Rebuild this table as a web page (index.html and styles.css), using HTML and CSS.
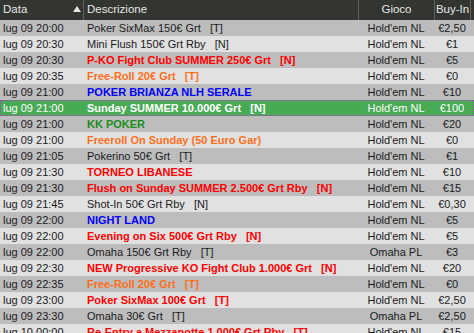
FILE: index.html
```html
<!DOCTYPE html>
<html>
<head>
<meta charset="utf-8">
<link rel="stylesheet" href="styles.css">
</head>
<body>
<div class="grid">
  <div class="hrow">
    <div class="h c-data">Data<span class="sort"></span></div>
    <div class="h c-desc">Descrizione</div>
    <div class="h c-game">Gioco</div>
    <div class="h c-buy">Buy-In</div>
    <div class="h c-end"></div>
  </div>
  <div class="row g"><div class="c-data">lug 09 20:00</div><div class="c-desc">Poker SixMax 150€ Grt   [T]</div><div class="c-game">Hold'em NL</div><div class="c-buy">€2,50</div></div>
  <div class="row l"><div class="c-data">lug 09 20:30</div><div class="c-desc">Mini Flush 150€ Grt Rby   [N]</div><div class="c-game">Hold'em NL</div><div class="c-buy">€1</div></div>
  <div class="row g"><div class="c-data">lug 09 20:30</div><div class="c-desc b red">P-KO Fight Club SUMMER 250€ Grt   [N]</div><div class="c-game">Hold'em NL</div><div class="c-buy">€5</div></div>
  <div class="row l"><div class="c-data">lug 09 20:35</div><div class="c-desc b orange">Free-Roll 20€ Grt   [T]</div><div class="c-game">Hold'em NL</div><div class="c-buy">€0</div></div>
  <div class="row g"><div class="c-data">lug 09 21:00</div><div class="c-desc b blue">POKER BRIANZA NLH SERALE</div><div class="c-game">Hold'em NL</div><div class="c-buy">€10</div></div>
  <div class="row sel"><div class="c-data">lug 09 21:00</div><div class="c-desc b">Sunday SUMMER 10.000€ Grt   [N]</div><div class="c-game">Hold'em NL</div><div class="c-buy">€100</div></div>
  <div class="row g"><div class="c-data">lug 09 21:00</div><div class="c-desc b green">KK POKER</div><div class="c-game">Hold'em NL</div><div class="c-buy">€20</div></div>
  <div class="row l"><div class="c-data">lug 09 21:00</div><div class="c-desc b orange">Freeroll On Sunday (50 Euro Gar)</div><div class="c-game">Hold'em NL</div><div class="c-buy">€0</div></div>
  <div class="row g"><div class="c-data">lug 09 21:05</div><div class="c-desc">Pokerino 50€ Grt   [T]</div><div class="c-game">Hold'em NL</div><div class="c-buy">€1</div></div>
  <div class="row l"><div class="c-data">lug 09 21:30</div><div class="c-desc b red">TORNEO LIBANESE</div><div class="c-game">Hold'em NL</div><div class="c-buy">€10</div></div>
  <div class="row g"><div class="c-data">lug 09 21:30</div><div class="c-desc b red">Flush on Sunday SUMMER 2.500€ Grt Rby   [N]</div><div class="c-game">Hold'em NL</div><div class="c-buy">€15</div></div>
  <div class="row l"><div class="c-data">lug 09 21:45</div><div class="c-desc">Shot-In 50€ Grt Rby   [N]</div><div class="c-game">Hold'em NL</div><div class="c-buy">€0,30</div></div>
  <div class="row g"><div class="c-data">lug 09 22:00</div><div class="c-desc b blue">NIGHT LAND</div><div class="c-game">Hold'em NL</div><div class="c-buy">€5</div></div>
  <div class="row l"><div class="c-data">lug 09 22:00</div><div class="c-desc b red">Evening on Six 500€ Grt Rby   [N]</div><div class="c-game">Hold'em NL</div><div class="c-buy">€5</div></div>
  <div class="row g"><div class="c-data">lug 09 22:00</div><div class="c-desc">Omaha 150€ Grt Rby   [T]</div><div class="c-game">Omaha PL</div><div class="c-buy">€3</div></div>
  <div class="row l"><div class="c-data">lug 09 22:30</div><div class="c-desc b red">NEW Progressive KO Fight Club 1.000€ Grt   [N]</div><div class="c-game">Hold'em NL</div><div class="c-buy">€20</div></div>
  <div class="row g"><div class="c-data">lug 09 22:35</div><div class="c-desc b orange">Free-Roll 20€ Grt   [T]</div><div class="c-game">Hold'em NL</div><div class="c-buy">€0</div></div>
  <div class="row l"><div class="c-data">lug 09 23:00</div><div class="c-desc b red">Poker SixMax 100€ Grt   [T]</div><div class="c-game">Hold'em NL</div><div class="c-buy">€2,50</div></div>
  <div class="row g"><div class="c-data">lug 09 23:30</div><div class="c-desc">Omaha 30€ Grt   [T]</div><div class="c-game">Omaha PL</div><div class="c-buy">€2,50</div></div>
  <div class="row l"><div class="c-data">lug 10 00:00</div><div class="c-desc b red">Re-Entry a Mezzanotte 1.000€ Grt Rby   [T]</div><div class="c-game">Hold'em NL</div><div class="c-buy">€15</div></div>
</div>
</body>
</html>
```
FILE: styles.css
```css
html, body {
  margin: 0;
  padding: 0;
  overflow: hidden;
  background: #e0e0e0;
}
body {
  font-family: "Liberation Sans", Arial, sans-serif;
  font-size: 11px;
  color: #1a1a22;
}
.grid {
  width: 474px;
}
.hrow, .row {
  display: grid;
  grid-template-columns: 83px 275px 76px 36px 4px;
}
.hrow {
  height: 20px;
  background: #333531;
  color: #e6e6e6;
  line-height: 19px;
  font-size: 11.5px;
}
.h {
  position: relative;
  white-space: nowrap;
  overflow: hidden;
}
.h + .h {
  border-left: 1px solid #5f615d;
}
.h.c-data { padding-left: 3px; }
.h.c-desc { padding-left: 3px; }
.h.c-game, .h.c-buy { text-align: center; }
.sort {
  position: absolute;
  right: 2px;
  top: 6px;
  width: 0;
  height: 0;
  border-left: 4px solid transparent;
  border-right: 4px solid transparent;
  border-bottom: 6px solid #e6e6e6;
}
.row {
  height: 16px;
  line-height: 16px;
  white-space: pre;
}
.row > div { overflow: hidden; }
.row.g { background: #bdbdbd; }
.row.l { background: #e1e1e1; }
.row.sel {
  background: #48aa55;
  color: #ffffff;
  outline: 1px dotted #b040c0;
  outline-offset: -1px;
}
.c-data { padding-left: 3px; }
.row .c-desc { padding-left: 4px; }
.c-game, .c-buy { text-align: center; }
.b { font-weight: bold; }
.red { color: #ff0000; }
.orange { color: #ff7020; }
.blue { color: #0000ff; }
.green { color: #1e8c1e; }
```
